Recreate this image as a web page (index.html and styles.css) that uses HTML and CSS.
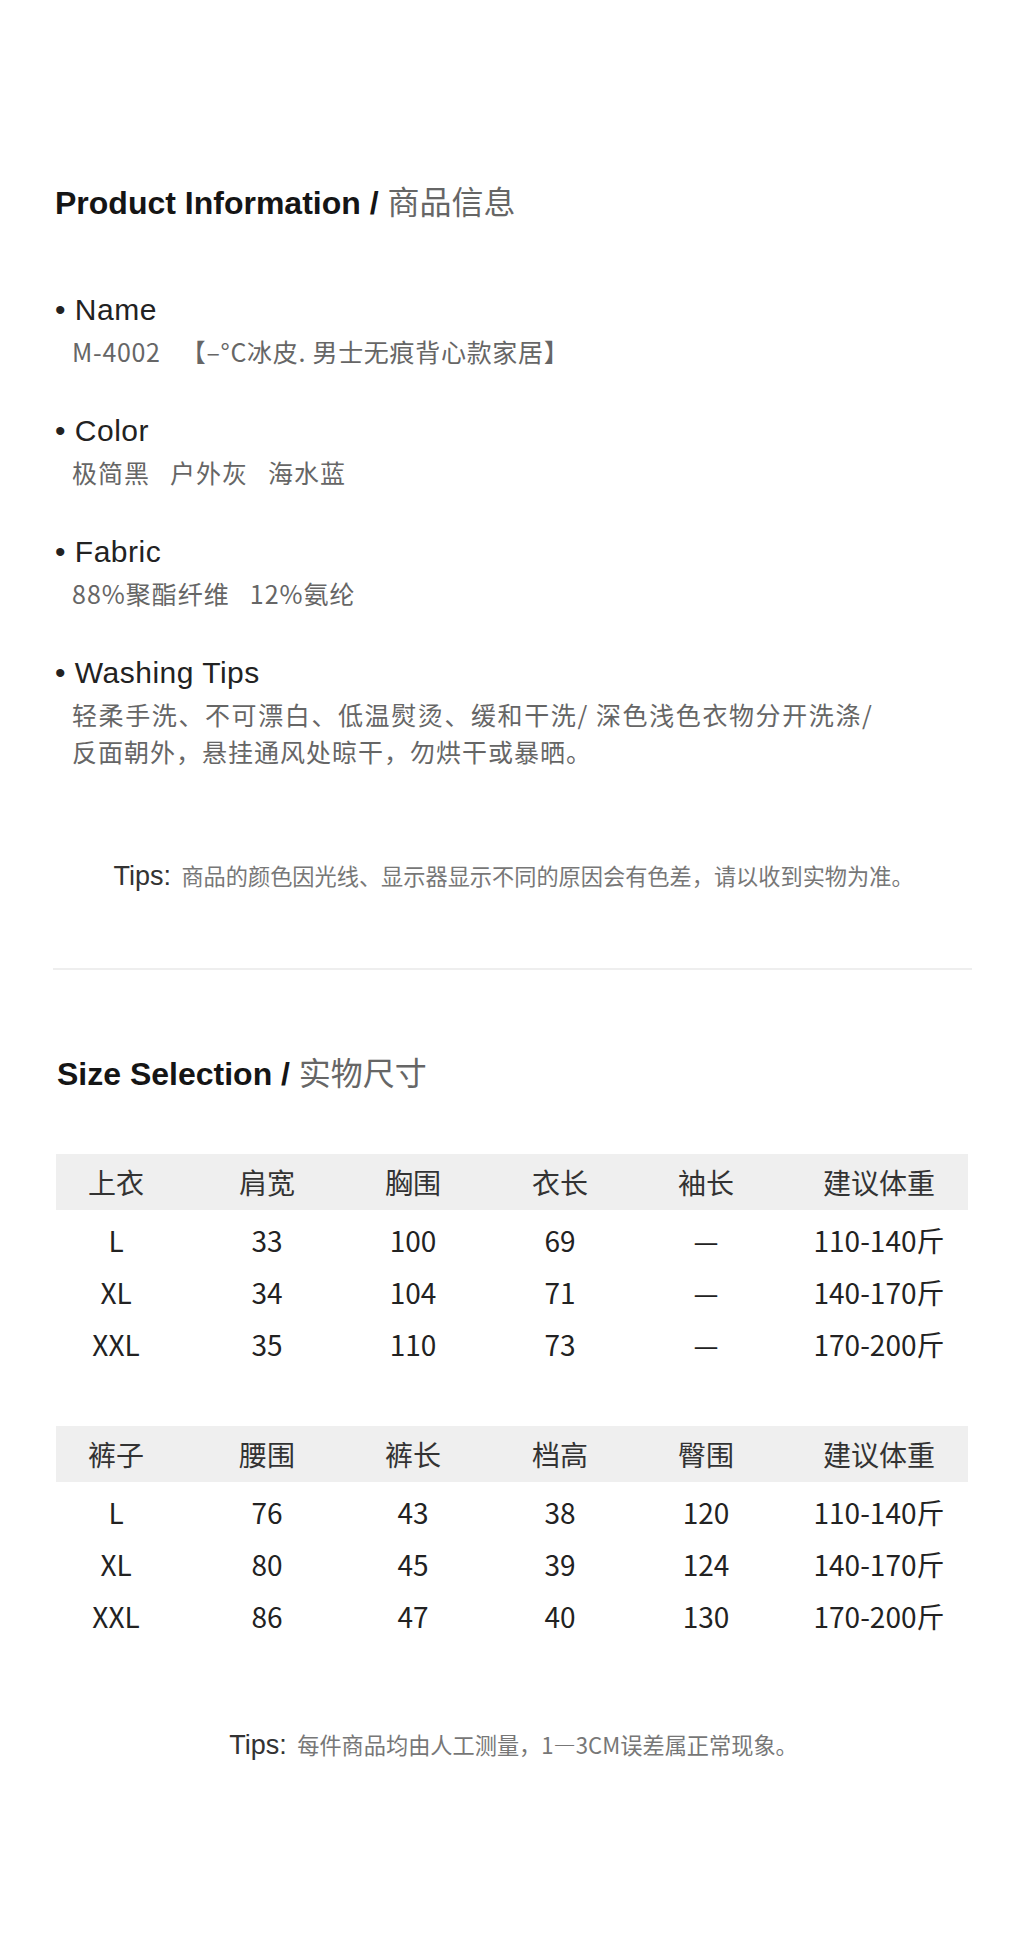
FILE: index.html
```html
<!DOCTYPE html>
<html lang="zh-CN">
<head>
    <meta charset="UTF-8">
    <meta name="viewport" content="width=device-width, initial-scale=1.0">
    <title>商品信息 / 实物尺寸</title>
    <link rel="stylesheet" href="styles.css">
</head>
<body>

<div class="page">

    <!-- Product information -->
    <h2 class="title">Product Information / <span class="title-cn">商品信息</span></h2>

    <div class="item">
        <div class="label">• Name</div>
        <div class="value value-name"><span class="part">M-4002</span>【–°C冰皮. 男士无痕背心款家居】</div>
    </div>

    <div class="item">
        <div class="label">• Color</div>
        <div class="value"><span class="part">极简黑</span><span class="part">户外灰</span>海水蓝</div>
    </div>

    <div class="item">
        <div class="label">• Fabric</div>
        <div class="value"><span class="part">88%聚酯纤维</span>12%氨纶</div>
    </div>

    <div class="item">
        <div class="label">• Washing Tips</div>
        <div class="value"><span class="wide">轻柔手洗、不可漂白、低温熨烫、缓和干洗/ 深色浅色衣物分开洗涤/</span><br>反面朝外，悬挂通风处晾干，勿烘干或暴晒。</div>
    </div>

    <p class="tips tips-info">Tips: <span class="tips-cn">商品的颜色因光线、显示器显示不同的原因会有色差，请以收到实物为准。</span></p>

    <hr class="divider">

    <!-- Size selection -->
    <h2 class="title title-size">Size Selection / <span class="title-cn">实物尺寸</span></h2>

    <div class="size-table">
        <div class="row head">
            <span>上衣</span><span>肩宽</span><span>胸围</span><span>衣长</span><span>袖长</span><span>建议体重</span>
        </div>
        <div class="row">
            <span>L</span><span>33</span><span>100</span><span>69</span><span>—</span><span>110-140斤</span>
        </div>
        <div class="row">
            <span>XL</span><span>34</span><span>104</span><span>71</span><span>—</span><span>140-170斤</span>
        </div>
        <div class="row">
            <span>XXL</span><span>35</span><span>110</span><span>73</span><span>—</span><span>170-200斤</span>
        </div>
    </div>

    <div class="size-table">
        <div class="row head">
            <span>裤子</span><span>腰围</span><span>裤长</span><span>档高</span><span>臀围</span><span>建议体重</span>
        </div>
        <div class="row">
            <span>L</span><span>76</span><span>43</span><span>38</span><span>120</span><span>110-140斤</span>
        </div>
        <div class="row">
            <span>XL</span><span>80</span><span>45</span><span>39</span><span>124</span><span>140-170斤</span>
        </div>
        <div class="row">
            <span>XXL</span><span>86</span><span>47</span><span>40</span><span>130</span><span>170-200斤</span>
        </div>
    </div>

    <p class="tips tips-size">Tips: <span class="tips-cn">每件商品均由人工测量，1—3CM误差属正常现象。</span></p>

</div>

</body>
</html>
```

FILE: styles.css
```css
body {
    margin: 0;
    padding: 0;
    background-color: #fff;
    font-family: 'Liberation Sans', 'Noto Sans CJK SC', sans-serif;
    color: #222;
}

.page {
    width: 1024px;
    height: 1943px;
    box-sizing: border-box;
    padding: 180px 52px 0 55px;
}

/* Section titles */
.title {
    font-size: 32px;
    line-height: 40px;
    font-weight: bold;
    color: #151515;
    margin: 0 0 69px;
}

.title-cn {
    font-family: 'Noto Sans CJK SC', sans-serif;
    font-weight: normal;
    color: #666;
}

.title-size {
    margin: 81px 0 60px 2px;
}

/* Info items */
.item {
    margin-bottom: 43px;
}

.label {
    font-size: 30px;
    line-height: 36px;
    letter-spacing: 0.5px;
    color: #222;
    margin-bottom: 5px;
}

.value {
    font-family: 'Noto Sans CJK SC', sans-serif;
    font-size: 25px;
    line-height: 37px;
    letter-spacing: 1px;
    color: #666;
    padding-left: 17px;
}

.value-name {
    letter-spacing: 0.7px;
}

.wide {
    letter-spacing: 1.6px;
}

.part {
    margin-right: 20px;
}

/* Tips lines */
.tips {
    font-size: 27px;
    line-height: 36px;
    color: #333;
    text-align: center;
    margin: 0;
}

.tips-cn {
    font-family: 'Noto Sans CJK SC', sans-serif;
    font-size: 22.2px;
    color: #777;
    margin-left: 3px;
}

.tips-info {
    margin-top: 87px;
}

.tips-size {
    margin-top: 84px;
}

.divider {
    border: none;
    height: 2px;
    background-color: #eee;
    margin: 74px 0 0 -2px;
}

/* Size tables */
.size-table {
    width: 912px;
    margin-left: 1px;
}

.size-table + .size-table {
    margin-top: 56px;
}

.row {
    display: grid;
    grid-template-columns: 120px 182px 110px 184px 108px 1fr;
    height: 52px;
    align-items: center;
    font-family: 'Noto Sans CJK SC', sans-serif;
    font-size: 28px;
    color: #222;
}

.row span {
    text-align: center;
}

.row span:last-child {
    padding-left: 30px;
}

.row.head {
    height: 56px;
    background-color: #efefef;
    color: #333;
    margin-bottom: 4px;
}
```
